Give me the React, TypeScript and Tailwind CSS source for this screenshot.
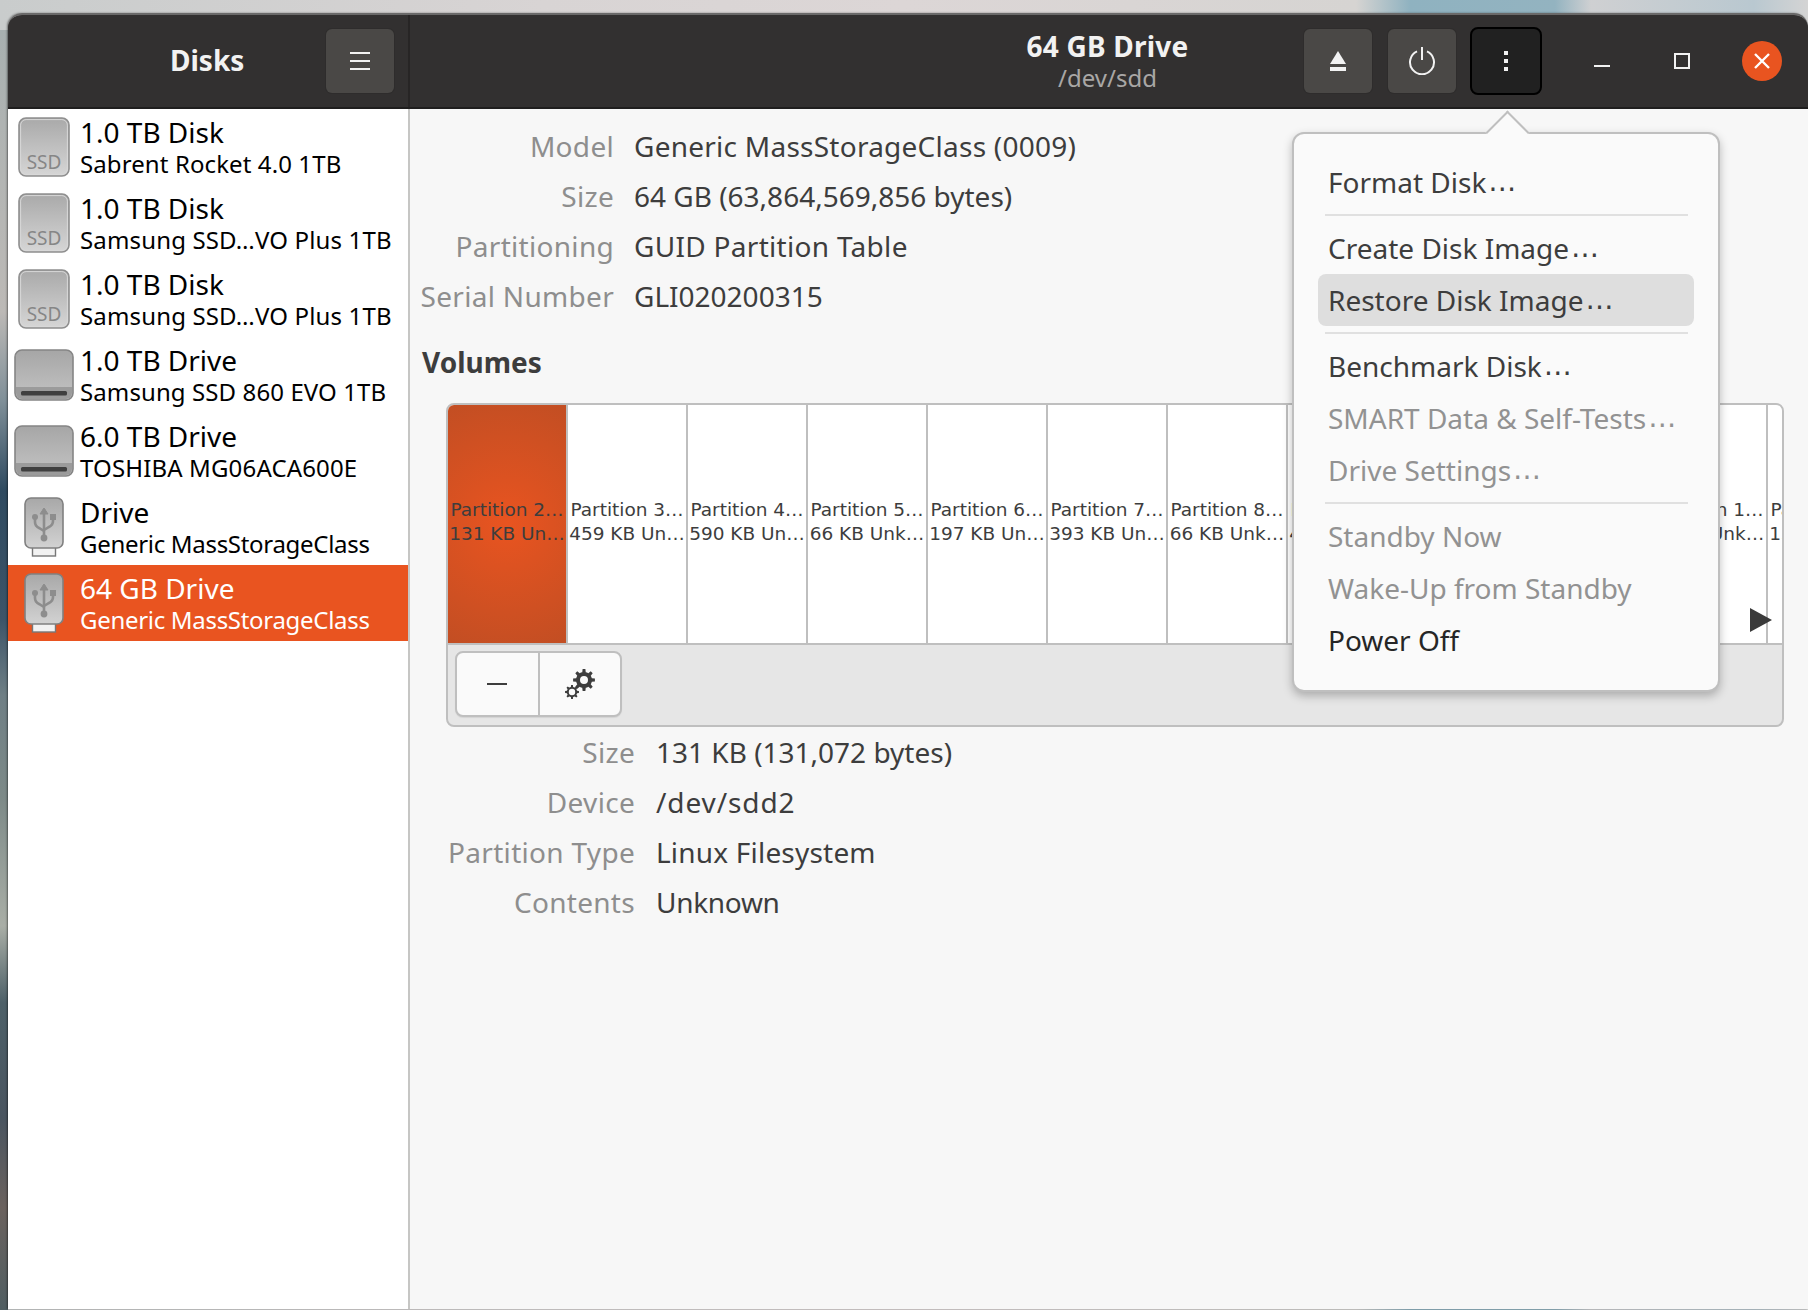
const ui = "font-['Noto_Sans',sans-serif]";

type Disk = { title: string; sub: string; icon: "ssd" | "hdd" | "usb"; selected?: boolean; subClass?: string };

const disks: Disk[] = [
  { title: "1.0 TB Disk", sub: "Sabrent Rocket 4.0 1TB", icon: "ssd", subClass: "tracking-[0.1px]" },
  { title: "1.0 TB Disk", sub: "Samsung SSD…VO Plus 1TB", icon: "ssd", subClass: "tracking-[0.15px]" },
  { title: "1.0 TB Disk", sub: "Samsung SSD…VO Plus 1TB", icon: "ssd", subClass: "tracking-[0.15px]" },
  { title: "1.0 TB Drive", sub: "Samsung SSD 860 EVO 1TB", icon: "hdd", subClass: "tracking-[0.1px]" },
  { title: "6.0 TB Drive", sub: "TOSHIBA MG06ACA600E", icon: "hdd", subClass: "tracking-[0.15px]" },
  { title: "Drive", sub: "Generic MassStorageClass", icon: "usb", subClass: "tracking-[-0.3px]" },
  { title: "64 GB Drive", sub: "Generic MassStorageClass", icon: "usb", selected: true, subClass: "tracking-[-0.3px]" },
];

const partitions = [
  ["Partition 2…", "131 KB Un…"],
  ["Partition 3…", "459 KB Un…"],
  ["Partition 4…", "590 KB Un…"],
  ["Partition 5…", "66 KB Unk…"],
  ["Partition 6…", "197 KB Un…"],
  ["Partition 7…", "393 KB Un…"],
  ["Partition 8…", "66 KB Unk…"],
  ["Partition 9…", "459 KB Un…"],
  ["Partition 1…", "66 KB Unk…"],
  ["Partition 1…", "66 KB Unk…"],
  ["Partition 1…", "66 KB Unk…"],
  ["Partition 1…", "131 KB Un…"],
];

const driveInfo = [
  { label: "Model", value: "Generic MassStorageClass (0009)", cls: "tracking-[0.25px]" },
  { label: "Size", value: "64 GB (63,864,569,856 bytes)" },
  { label: "Partitioning", value: "GUID Partition Table", cls: "tracking-[0.3px]" },
  { label: "Serial Number", value: "GLI020200315" },
];

const volumeInfo = [
  { label: "Size", value: "131 KB (131,072 bytes)" },
  { label: "Device", value: "/dev/sdd2", cls: "tracking-[0.9px]" },
  { label: "Partition Type", value: "Linux Filesystem", cls: "tracking-[0.2px]" },
  { label: "Contents", value: "Unknown", cls: "tracking-[-0.3px]" },
];

function gearPath(cx: number, cy: number, outer: number, inner: number, hole: number, teeth: number) {
  let d = "";
  const step = (Math.PI * 2) / teeth;
  for (let i = 0; i < teeth; i++) {
    const a = i * step;
    const pts = [
      [inner, a - step * 0.5],
      [inner, a - step * 0.28],
      [outer, a - step * 0.16],
      [outer, a + step * 0.16],
      [inner, a + step * 0.28],
    ];
    for (const [r, t] of pts) {
      d += `${d ? "L" : "M"}${(cx + r * Math.cos(t)).toFixed(2)} ${(cy + r * Math.sin(t)).toFixed(2)}`;
    }
  }
  d += `Z M${cx + hole} ${cy}A${hole} ${hole} 0 1 0 ${cx - hole} ${cy}A${hole} ${hole} 0 1 0 ${cx + hole} ${cy}Z`;
  return d;
}

function DiskIcon({ type }: { type: Disk["icon"] }) {
  if (type === "ssd") {
    return (
      <svg width="52" height="60" viewBox="0 0 52 60">
        <defs>
          <linearGradient id="ssdFill" x1="0" y1="0" x2="0" y2="1">
            <stop offset="0" stopColor="#a9a9a9" />
            <stop offset="1" stopColor="#d6d6d6" />
          </linearGradient>
        </defs>
        <rect x="1" y="1" width="50" height="58" rx="7" fill="url(#ssdFill)" stroke="#8f8f8f" strokeWidth="1.6" />
        <rect x="2.6" y="2.6" width="46.8" height="54.8" rx="5.5" fill="none" stroke="#d8d8d8" strokeWidth="1" />
        <text x="26" y="52" textAnchor="middle" fontSize="19" fill="#868686" fontFamily="Noto Sans, sans-serif">
          SSD
        </text>
      </svg>
    );
  }
  if (type === "hdd") {
    return (
      <svg width="60" height="52" viewBox="0 0 60 52">
        <defs>
          <linearGradient id="hddFill" x1="0" y1="0" x2="0" y2="1">
            <stop offset="0" stopColor="#a6a6a6" />
            <stop offset="1" stopColor="#c4c4c4" />
          </linearGradient>
        </defs>
        <rect x="1" y="1" width="58" height="50" rx="7" fill="url(#hddFill)" stroke="#858585" strokeWidth="1.6" />
        <path d="M2 38H58V44a6 6 0 0 1-6 6H8a6 6 0 0 1-6-6Z" fill="#9b9b9b" />
        <rect x="7" y="42" width="46" height="4.5" rx="1.5" fill="#3f3f3f" />
      </svg>
    );
  }
  return (
    <svg width="40" height="60" viewBox="0 0 40 60">
      <defs>
        <linearGradient id="usbFill" x1="0" y1="0" x2="0" y2="1">
          <stop offset="0" stopColor="#a8a8a8" />
          <stop offset="1" stopColor="#d2d2d2" />
        </linearGradient>
      </defs>
      <rect x="8.5" y="50" width="23" height="9" fill="#f2f2f2" stroke="#777" strokeWidth="1.4" />
      <rect x="1" y="1" width="38" height="50" rx="6" fill="url(#usbFill)" stroke="#808080" strokeWidth="1.6" />
      <g fill="none" stroke="#8d8d8d" strokeWidth="2.6">
        <path d="M20 12V40" />
        <path d="M11 20V25Q11 29 15 31L20 34" />
        <path d="M29 20V24Q29 28 25 30L20 33" />
      </g>
      <path d="M20 11L16 17H24Z" fill="#8d8d8d" stroke="#8d8d8d" strokeWidth="1" />
      <circle cx="11" cy="20" r="3" fill="#8d8d8d" />
      <rect x="26" y="17" width="6" height="6" fill="#8d8d8d" />
      <circle cx="20" cy="41" r="3.4" fill="#8d8d8d" />
    </svg>
  );
}

function HeaderButton({ children }: { children: React.ReactNode }) {
  return (
    <button className="flex h-[64px] w-[68px] items-center justify-center rounded-[6px] bg-[#4a4846] shadow-[0_0_0_1px_#2e2c2c]">
      {children}
    </button>
  );
}

function InfoRow({ label, value, labelClass, cls }: { label: string; value: string; labelClass: string; cls?: string }) {
  return (
    <div className="flex h-[50px] items-center text-[28px]">
      <span className={`${labelClass} text-right tracking-[0.3px] text-[#8e8e8e]`}>{label}</span>
      <span className={`text-[#3d3d3d] ${cls ?? ""}`}>{value}</span>
    </div>
  );
}

function MenuItem({ label, disabled, strong, active }: { label: string; disabled?: boolean; strong?: boolean; active?: boolean }) {
  const color = disabled ? "text-[#929292]" : strong ? "text-[#262626]" : "text-[#3d3d3d]";
  const dots = label.endsWith("…");
  return (
    <div className={`flex h-[52px] items-center whitespace-pre rounded-[8px] px-[10px] text-[28px] ${color} ${active ? "bg-[#dedede]" : ""}`}>
      {dots ? label.slice(0, -1) : label}
      {dots && <span className="ml-[2px] font-['DejaVu_Sans',sans-serif]">…</span>}
    </div>
  );
}

function MenuSep() {
  return <div className="my-[6px] ml-[7px] mr-[6px] h-[2px] bg-[#e0e0e0]" />;
}

export default function App() {
  return (
    <div className={`${ui} flex h-[1310px] w-[1808px] overflow-hidden bg-[linear-gradient(to_right,#c9cccc_0%,#d8d4d4_30%,#dcd6d6_50%,#d6d4d2_75%,#8fb2c0_78%,#93b3c0_86%,#cfd0d2_88%,#b9c8d0_97%,#d4d4d4_100%)]`}>
      <div className="mt-[30px] w-[8px] shrink-0 bg-[linear-gradient(to_bottom,#a8b0b0_0%,#bcb9b6_22%,#7f8f98_29%,#2f4a60_36%,#3c5468_46%,#6f7f85_52%,#7d8a88_60%,#a9aea6_70%,#4d6068_76%,#4a5560_85%,#6b625e_92%,#505e62_100%)]" />
      <div className="relative mb-px mt-[13px] flex min-w-0 flex-1 flex-col overflow-hidden rounded-t-[14px] border-t-2 border-[#6a6969] shadow-[-1px_0_2px_rgba(0,0,0,0.45)]">
        {/* header bar */}
        <header className="flex h-[94px] shrink-0 border-b-2 border-[#1f1e1e] bg-[#323030] text-white">
          <div className="flex w-[400px] shrink-0 items-center justify-between pl-[162px] pr-[14px]">
            <span className="mb-[2px] text-[28px] font-bold text-[#f2f2f2]">Disks</span>
            <HeaderButton>
              <svg width="20" height="18" viewBox="0 0 20 18" fill="#f2f2f2">
                <rect y="0" width="20" height="2" />
                <rect y="8" width="20" height="2" />
                <rect y="16" width="20" height="2" />
              </svg>
            </HeaderButton>
          </div>
          <div className="grid flex-1 grid-cols-[1fr_auto_1fr] items-center border-l-2 border-[#272525]">
            <div />
            <div className="flex flex-col items-center pb-[2px] pr-[3px]">
              <span className="text-[28px] font-bold leading-[36px] tracking-[0.2px] text-[#f2f2f2]">64 GB Drive</span>
              <span className="text-[24px] leading-[28px] text-[#a9a7a5]">/dev/sdd</span>
            </div>
            <div className="flex items-center justify-end pr-[6px]">
              <HeaderButton>
                <svg width="18" height="20" viewBox="0 0 18 20" fill="#f2f2f2">
                  <path d="M9 0L17 13H1Z" />
                  <rect x="1" y="16" width="16" height="4" />
                </svg>
              </HeaderButton>
              <div className="ml-[16px]">
                <HeaderButton>
                  <svg width="28" height="28" viewBox="0 0 28 28" fill="none" stroke="#f2f2f2" strokeWidth="2">
                    <path d="M9 4.4A12 12 0 1 0 19 4.4" />
                    <path d="M14 0V13" />
                  </svg>
                </HeaderButton>
              </div>
              <button className="ml-[14px] flex h-[68px] w-[72px] items-center justify-center rounded-[8px] border-2 border-black bg-[#212121]">
                <svg width="4" height="20" viewBox="0 0 4 20" fill="#f2f2f2">
                  <rect width="4" height="4" />
                  <rect y="8" width="4" height="4" />
                  <rect y="16" width="4" height="4" />
                </svg>
              </button>
              <div className="ml-[20px] flex h-[40px] w-[80px] items-center justify-center">
                <div className="mt-[10px] h-[2px] w-[16px] bg-[#f2f2f2]" />
              </div>
              <div className="flex h-[40px] w-[80px] items-center justify-center">
                <div className="h-[16px] w-[16px] border-2 border-[#f2f2f2]" />
              </div>
              <div className="flex h-[40px] w-[80px] items-center justify-center">
                <div className="flex h-[40px] w-[40px] items-center justify-center rounded-full bg-[#e95420]">
                  <svg width="16" height="16" viewBox="0 0 16 16" stroke="#fff" strokeWidth="2.4">
                    <path d="M1 1L15 15M15 1L1 15" />
                  </svg>
                </div>
              </div>
            </div>
          </div>
        </header>

        <div className="flex min-h-0 flex-1">
          {/* disk list */}
          <aside className="w-[402px] shrink-0 border-r-2 border-[#c6c6c4] bg-white">
            {disks.map((disk, i) => (
              <div key={i} className={`flex h-[76px] items-center ${disk.selected ? "bg-[#e95420] text-white" : "text-black"}`}>
                <div className="flex w-[72px] shrink-0 justify-center">
                  <DiskIcon type={disk.icon} />
                </div>
                <div className="min-w-0">
                  <div className="text-[28px] leading-[34px]">{disk.title}</div>
                  <div className={`whitespace-nowrap text-[24px] leading-[30px] ${disk.subClass ?? ""}`}>{disk.sub}</div>
                </div>
              </div>
            ))}
          </aside>

          {/* drive details */}
          <main className="min-w-0 flex-1 bg-[#f7f7f7] pt-[12px]">
            {driveInfo.map((row) => (
              <InfoRow key={row.label} label={row.label} value={row.value} cls={row.cls} labelClass="mr-[20px] w-[204px]" />
            ))}
            <h2 className="ml-[12px] mt-[16px] flex h-[50px] items-center text-[28px] font-bold text-[#3d3d3d]">Volumes</h2>
            <div className="relative ml-[36px] mr-[24px] mt-[16px] h-[324px] overflow-hidden rounded-[8px] border-2 border-[#bfbfbf] bg-[#e6e6e6]">
              <div className="flex h-[240px] overflow-hidden border-b-2 border-[#bfbfbf] bg-white font-['DejaVu_Sans',sans-serif] text-[18.5px] leading-[24px] text-[#3d3d3d]">
                {partitions.map(([name, size], i) => (
                  <div
                    key={i}
                    className={`flex w-[120px] shrink-0 flex-col items-center justify-center overflow-hidden whitespace-nowrap border-r-2 border-[#bfbfbf] pb-[4px] ${
                      i === 0 ? "bg-[radial-gradient(circle_at_center,#e95420_0%,#c24e23_100%)]" : ""
                    }`}
                  >
                    <span>{name}</span>
                    <span>{size}</span>
                  </div>
                ))}
              </div>
              <svg className="absolute right-[10px] top-[203px]" width="22" height="24" viewBox="0 0 22 24">
                <path d="M0 0L22 12L0 24Z" fill="#3a3a3a" />
              </svg>
              <div className="ml-[7px] mt-[6px] flex h-[66px] w-[167px] overflow-hidden rounded-[8px] border-2 border-[#bfbfbf] bg-[#fafafa] shadow-[0_1px_1px_rgba(0,0,0,0.08)]">
                <div className="flex w-[83px] items-center justify-center border-r-2 border-[#bfbfbf] pr-[2px]">
                  <div className="h-[2px] w-[20px] bg-[#3d3d3d]" />
                </div>
                <div className="flex flex-1 items-center justify-center">
                  <svg width="32" height="32" viewBox="0 0 32 32" fill="#3d3d3d" fillRule="evenodd">
                    <path d={gearPath(20, 12, 11, 8, 4, 8)} />
                    <path d={gearPath(8, 24, 7, 5.2, 3.2, 8)} />
                  </svg>
                </div>
              </div>
            </div>
            <div>
              {volumeInfo.map((row) => (
                <InfoRow key={row.label} label={row.label} value={row.value} cls={row.cls} labelClass="mr-[21px] w-[225px]" />
              ))}
            </div>
          </main>
        </div>

        {/* popover menu */}
        <div className="absolute left-[1284px] top-[117px] z-10 w-[428px] rounded-[12px] border-2 border-[#bfbfbf] bg-[#fafafa] px-[24px] pb-[24px] pt-[22px] shadow-[0_4px_10px_rgba(0,0,0,0.25)]">
          <div className="absolute left-[198px] top-[-17px] h-[31px] w-[31px] rotate-45 border-l-2 border-t-2 border-[#bfbfbf] bg-[#fafafa]" />
          <div className="relative">
            <MenuItem label="Format Disk…" />
            <MenuSep />
            <MenuItem label="Create Disk Image…" />
            <MenuItem label="Restore Disk Image…" active />
            <MenuSep />
            <MenuItem label="Benchmark Disk…" />
            <MenuItem label="SMART Data & Self-Tests…" disabled />
            <MenuItem label="Drive Settings…" disabled />
            <MenuSep />
            <MenuItem label="Standby Now" disabled />
            <MenuItem label="Wake-Up from Standby" disabled />
            <MenuItem label="Power Off" strong />
          </div>
        </div>
      </div>
    </div>
  );
}
